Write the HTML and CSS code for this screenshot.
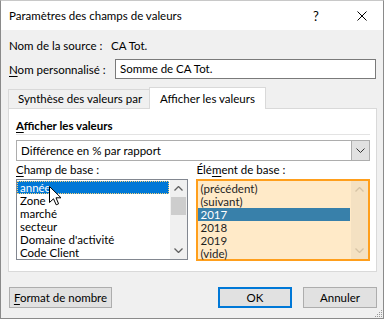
FILE: index.html
```html
<!DOCTYPE html>
<html lang="fr">
<head>
    <meta charset="UTF-8">
    <meta name="viewport" content="width=device-width, initial-scale=1.0">
    <title>Paramètres des champs de valeurs</title>
    <link rel="stylesheet" href="styles.css">
</head>
<body>
    <div class="dialog">
        <div class="titlebar">
            <span class="title">Paramètres des champs de valeurs</span>
            <span class="help">?</span>
            <span class="close">
                <svg width="10" height="10" viewBox="0 0 10 10"><path d="M0.5 0.5 L9.5 9.5 M9.5 0.5 L0.5 9.5" stroke="#000" stroke-width="1" fill="none"/></svg>
            </span>
        </div>

        <div class="content">
            <div class="row source">
                <span class="row-label">Nom de la source :</span>
                <span class="row-value">CA Tot.</span>
            </div>
            <div class="row custom">
                <span class="row-label"><u>N</u>om personnalisé :</span>
                <div class="textbox">Somme de CA Tot.</div>
            </div>

            <div class="tabs">
                <div class="tab">Synthèse des valeurs par</div>
                <div class="tab active">Afficher les valeurs</div>
            </div>

            <div class="panel">
                <div class="group-title"><u>A</u>fficher les valeurs</div>
                <div class="select">
                    <span class="select-text">Différence en % par rapport</span>
                    <span class="select-btn">
                        <svg width="9" height="5" viewBox="0 0 9 5"><path d="M0.5 0.5 L4.5 4.5 L8.5 0.5" stroke="#333" fill="none"/></svg>
                    </span>
                </div>

                <div class="lists">
                    <div class="col left">
                        <div class="list-label"><u>C</u>hamp de base :</div>
                        <div class="listbox">
                            <div class="items">
                                <div class="item selected focus">année</div>
                                <div class="item">Zone</div>
                                <div class="item">marché</div>
                                <div class="item">secteur</div>
                                <div class="item">Domaine d'activité</div>
                                <div class="item">Code Client</div>
                            </div>
                            <div class="scrollbar">
                                <div class="sb-btn">
                                    <svg width="9" height="5" viewBox="0 0 9 5"><path d="M0.5 4.5 L4.5 0.5 L8.5 4.5" stroke="#606060" stroke-width="1.3" fill="none"/></svg>
                                </div>
                                <div class="sb-thumb"></div>
                                <div class="sb-track"></div>
                                <div class="sb-btn">
                                    <svg width="9" height="5" viewBox="0 0 9 5"><path d="M0.5 0.5 L4.5 4.5 L8.5 0.5" stroke="#606060" stroke-width="1.3" fill="none"/></svg>
                                </div>
                            </div>
                        </div>
                    </div>
                    <div class="col right">
                        <div class="list-label">Élé<u>m</u>ent de base :</div>
                        <div class="listbox highlighted">
                            <div class="items">
                                <div class="item">(précédent)</div>
                                <div class="item">(suivant)</div>
                                <div class="item selected">2017</div>
                                <div class="item">2018</div>
                                <div class="item">2019</div>
                                <div class="item">(vide)</div>
                            </div>
                            <div class="scrollbar">
                                <div class="sb-btn">
                                    <svg width="9" height="5" viewBox="0 0 9 5"><path d="M0.5 4.5 L4.5 0.5 L8.5 4.5" stroke="#d6c3a4" stroke-width="1.3" fill="none"/></svg>
                                </div>
                                <div class="sb-track"></div>
                                <div class="sb-btn">
                                    <svg width="9" height="5" viewBox="0 0 9 5"><path d="M0.5 0.5 L4.5 4.5 L8.5 0.5" stroke="#d6c3a4" stroke-width="1.3" fill="none"/></svg>
                                </div>
                            </div>
                        </div>
                    </div>
                </div>
            </div>

            <div class="buttons">
                <button class="btn format"><u>F</u>ormat de nombre</button>
                <span class="spacer"></span>
                <button class="btn default">OK</button>
                <button class="btn">Annuler</button>
            </div>
        </div>

        <svg class="grip" width="9" height="9" viewBox="0 0 9 9">
            <rect x="7" y="1" width="1" height="1" fill="#999"/>
            <rect x="5" y="3" width="1" height="1" fill="#999"/>
            <rect x="7" y="3" width="1" height="1" fill="#999"/>
            <rect x="3" y="5" width="1" height="1" fill="#999"/>
            <rect x="5" y="5" width="1" height="1" fill="#999"/>
            <rect x="7" y="5" width="1" height="1" fill="#999"/>
            <rect x="1" y="7" width="1" height="1" fill="#999"/>
            <rect x="3" y="7" width="1" height="1" fill="#999"/>
            <rect x="5" y="7" width="1" height="1" fill="#999"/>
            <rect x="7" y="7" width="1" height="1" fill="#999"/>
        </svg>

        <svg class="cursor" width="13" height="20" viewBox="0 0 13 20">
            <path d="M0.5 0.5 L0.5 16.5 L4.5 12.8 L7.2 18.8 L9.6 17.8 L7 11.8 L12 11.8 Z" fill="#fff" stroke="#000" stroke-width="1" stroke-linejoin="round"/>
        </svg>
    </div>
</body>
</html>
```

FILE: styles.css
```css
body {
    margin: 0;
    background-color: #ffffff;
    font-family: Lato, "Noto Sans", sans-serif;
    font-size: 11.5px;
    color: #000000;
}
u {
    text-decoration-thickness: 1px;
    text-underline-offset: 2px;
}
.dialog {
    position: relative;
    width: 382px;
    height: 317px;
    border: 1px solid #8a8a8a;
    border-top-color: #c8c8c8;
    background-color: #f0f0f0;
}
.titlebar {
    display: flex;
    align-items: center;
    height: 29px;
    background-color: #ffffff;
}
.title {
    margin-left: 8px;
    flex: 1;
}
.help {
    width: 8px;
    margin-right: 36px;
    font-size: 13px;
}
.close {
    display: flex;
    margin-right: 16px;
}
.content {
    padding: 0 6px 0 7px;
}
.row {
    display: flex;
    align-items: center;
}
.row.source {
    height: 20px;
    margin-top: 5px;
}
.row.custom {
    height: 20px;
    margin-top: 4px;
}
.row-label {
    margin-left: 1px;
    width: 106px;
}
.row.source .row-label {
    width: 102px;
}
.textbox {
    flex: 1;
    height: 18px;
    line-height: 18px;
    border: 1px solid #7a7a7a;
    background-color: #ffffff;
    padding-left: 4px;
    margin-right: 1px;
}
.tabs {
    display: flex;
    align-items: flex-end;
    margin-top: 8px;
    height: 21px;
}
.tab {
    width: 131px;
    height: 18px;
    line-height: 18px;
    padding: 0 0 0 9px;
    border: 1px solid #d9d9d9;
    border-bottom: none;
    border-right: none;
    white-space: nowrap;
}
.tab.active {
    width: 105px;
    height: 21px;
    line-height: 21px;
    padding: 0 0 0 10px;
    background-color: #ffffff;
    border-right: 1px solid #d9d9d9;
    position: relative;
    margin-bottom: -1px;
    z-index: 1;
}
.panel {
    width: 354px;
    height: 154px;
    border: 1px solid #d9d9d9;
    background-color: #ffffff;
    padding: 8px 6px 0 7px;
}
.group-title {
    font-weight: bold;
    height: 17px;
    line-height: 17px;
    border-bottom: 1px solid #e3e3e3;
}
.select {
    display: flex;
    margin-top: 5px;
    height: 19px;
    border: 1px solid #adadad;
    background-color: #ffffff;
}
.select-text {
    flex: 1;
    line-height: 19px;
    padding-left: 4px;
}
.select-btn {
    width: 17px;
    display: flex;
    align-items: center;
    justify-content: center;
    background-color: #e1e1e1;
    border-left: 1px solid #adadad;
}
.lists {
    display: flex;
    gap: 8px;
}
.col.left {
    width: 173px;
}
.col.right {
    width: 176px;
}
.list-label {
    height: 18px;
    line-height: 18px;
}
.col.right .list-label {
    margin-left: 1px;
}
.listbox {
    display: flex;
    height: 79px;
    border: 1px solid #828790;
    background-color: #ffffff;
}
.items {
    flex: 1;
    padding-top: 1px;
}
.item {
    height: 13px;
    line-height: 13px;
    padding-left: 3px;
    white-space: nowrap;
}
.item.selected {
    background-color: #0078d7;
    color: #ffffff;
}
.item.focus {
    outline: 1px dotted #f5d27a;
    outline-offset: -1px;
    margin-right: 1px;
}
.scrollbar {
    width: 17px;
    display: flex;
    flex-direction: column;
    background-color: #f0f0f0;
}
.sb-btn {
    height: 17px;
    display: flex;
    align-items: center;
    justify-content: center;
}
.sb-thumb {
    height: 18px;
    margin: 0 1px;
    background-color: #cdcdcd;
}
.sb-track {
    flex: 1;
}
.listbox.highlighted {
    height: 78px;
    border: 2px solid #ff9f1c;
    background-color: #ffeac8;
    color: #1e1e1e;
}
.listbox.highlighted .item.selected {
    background-color: #3880aa;
    color: #ffffff;
    margin-right: 1px;
}
.listbox.highlighted .scrollbar {
    background-color: #f4e1c2;
}
.buttons {
    display: flex;
    margin-top: 15px;
    padding-left: 1px;
}
.spacer {
    flex: 1;
}
.btn {
    height: 21px;
    padding: 0;
    border: 1px solid #adadad;
    background-color: #e1e1e1;
    font-family: Lato, "Noto Sans", sans-serif;
    font-size: 11.5px;
    color: #000000;
    width: 74px;
    margin-left: 11px;
    white-space: nowrap;
}
.btn.format {
    width: 103px;
    margin-left: 0;
}
.btn.default {
    border: 2px solid #0078d7;
}
.grip {
    position: absolute;
    right: 0;
    bottom: 0;
}
.cursor {
    position: absolute;
    left: 48px;
    top: 185px;
}
```
